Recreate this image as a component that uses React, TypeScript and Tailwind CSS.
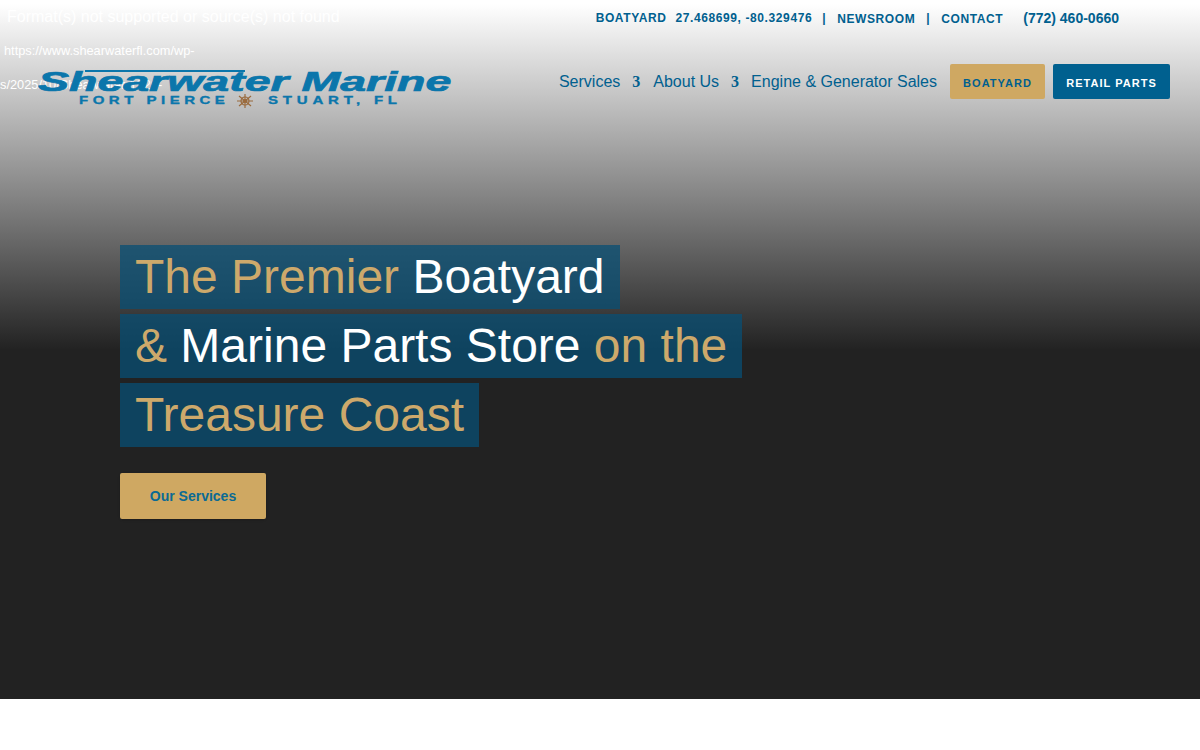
export default function App() {
  const sans = "font-['Liberation_Sans',Arial,sans-serif]";
  return (
    <div className={`${sans} w-full h-[750px] bg-white overflow-hidden`}>
      <div className="relative h-[699px] bg-[linear-gradient(to_bottom,#ffffff_4px,#222222_350px,#222222_100%)]">
        {/* failed video player message, sits behind the header */}
        <div className="absolute left-0 top-0 w-[345px] text-white">
          <div className="absolute left-[7px] top-[8px] whitespace-nowrap text-[16px] leading-[18px]">Format(s) not supported or source(s) not found</div>
          <div className="absolute left-[4px] top-[43px] whitespace-nowrap text-[12.8px] leading-[16px]">https://www.shearwaterfl.com/wp-</div>
          <div className="absolute left-0 top-[77px] whitespace-nowrap text-[12.8px] leading-[16px]">s/2025/10/Shearwater-1920-</div>
        </div>

        <header className="relative flex justify-between pl-[38px] pr-[30px]">
          <div className="w-[414px] pt-[66px]">
            <Logo />
          </div>
          <div className="flex flex-col items-end">
            <div className="flex h-[36px] items-center pr-[51px] text-[12px] font-bold tracking-[0.6px] text-[#00608f]">
              <span>BOATYARD</span>
              <span className="ml-[9px]">27.468699, -80.329476</span>
              <span className="ml-[10px]">|</span>
              <span className="ml-[11px] translate-y-px">NEWSROOM</span>
              <span className="ml-[11px]">|</span>
              <span className="ml-[11px] translate-y-px">CONTACT</span>
              <span className="ml-[20px] text-[14px] tracking-normal">(772) 460-0660</span>
            </div>
            <nav className="mt-[28px] flex h-[35px] items-center text-[16px] text-[#00608f]">
              <span>Services</span>
              <span className="ml-[12px] font-['Liberation_Serif',serif] text-[16px] font-bold">3</span>
              <span className="ml-[13px]">About Us</span>
              <span className="ml-[12px] font-['Liberation_Serif',serif] text-[16px] font-bold">3</span>
              <span className="ml-[12px]">Engine &amp; Generator Sales</span>
              <span className="ml-[13px] flex h-[35px] w-[95px] items-center justify-center rounded-[2px] bg-[#cfa862] pt-[3px] text-[11px] font-bold tracking-[1.05px] text-[#00608f]">BOATYARD</span>
              <span className="ml-[8px] flex h-[35px] w-[117px] items-center justify-center rounded-[2px] bg-[#00608f] pt-[3px] text-[11px] font-bold tracking-[1.03px] text-white">RETAIL PARTS</span>
            </nav>
          </div>
        </header>

        <main className="pl-[120px] pt-[137px]">
          <h1 className="flex flex-col items-start gap-[5px] text-[48px] font-normal leading-[64px]">
            <span className="bg-[#084f74]/75 px-[15px] text-[#cda96b]">The Premier <span className="text-white">Boatyard</span></span>
            <span className="bg-[#084f74]/75 px-[15px] text-[#cda96b]">&amp; <span className="text-white">Marine Parts Store</span> on the</span>
            <span className="bg-[#084f74]/75 px-[15px] text-[#cda96b]">Treasure Coast</span>
          </h1>
          <div className="mt-[26px] flex h-[46px] w-[146px] items-center justify-center rounded-[2px] bg-[#cfa862] text-[14px] font-bold text-[#0a6a94] shadow-sm">Our Services</div>
        </main>
      </div>
    </div>
  );
}

function Logo() {
  return (
    <div className="relative h-[42px] w-[414px]">
      <svg className="absolute left-[47px] top-[4px]" width="160" height="3" viewBox="0 0 160 3"><rect width="160" height="2" fill="#0b76ab" /></svg>
      <div className="absolute left-0 top-[2px] origin-left scale-x-[1.66] whitespace-nowrap text-[28px] font-bold italic leading-[28px] text-[#0b76ab] [-webkit-text-stroke:0.7px_#0b76ab]">Shearwater Marine</div>
      <div className="absolute left-[41px] top-[29px] origin-left scale-x-[1.5] whitespace-nowrap text-[10px] font-bold leading-[12px] tracking-[3px] text-[#0b76ab] [-webkit-text-stroke:0.3px_#0b76ab]">FORT PIERCE</div>
      <svg className="absolute left-[197px] top-[28px]" width="20" height="14" viewBox="0 0 20 14" fill="none" stroke="#9a6a3c" strokeWidth="1.2">
        <circle cx="10" cy="7" r="4" />
        <circle cx="10" cy="7" r="1.4" />
        <path d="M10 0v14M2 7h16M4 2l12 10M16 2L4 12" />
      </svg>
      <div className="absolute left-[230px] top-[29px] origin-left scale-x-[1.5] whitespace-nowrap text-[10px] font-bold leading-[12px] tracking-[3.2px] text-[#0b76ab] [-webkit-text-stroke:0.3px_#0b76ab]">STUART, FL</div>
    </div>
  );
}
